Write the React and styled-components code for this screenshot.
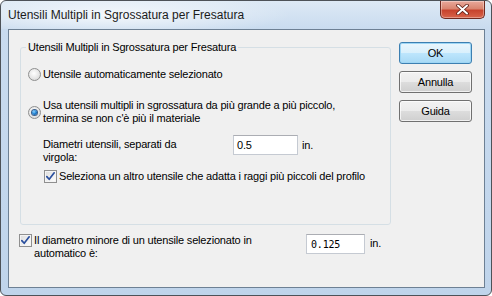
import React from 'react';
import styled, { createGlobalStyle } from 'styled-components';

const GlobalStyle = createGlobalStyle`
  html, body {
    margin: 0;
    padding: 0;
    background: #ffffff;
  }
  body {
    font-family: Tahoma, "Liberation Sans", Arial, sans-serif;
    font-size: 11px;
    letter-spacing: -0.18px;
    color: #000;
  }
`;

const Window = styled.div`
  width: 492px;
  height: 296px;
  box-sizing: border-box;
  border: 1px solid #4d5258;
  border-radius: 6px;
  background: linear-gradient(to bottom, #dde9f5 0px, #c9dbef 28px, #bfd4eb 100%);
  display: flex;
  flex-direction: column;
  overflow: hidden;
`;

const TitleBar = styled.div`
  height: 28px;
  display: flex;
  align-items: flex-start;
  justify-content: space-between;
  padding-left: 7px;
  padding-right: 6px;
  background: radial-gradient(ellipse 180px 22px at 110px 14px, rgba(255, 255, 255, 0.75), rgba(255, 255, 255, 0) 100%);
`;

const Title = styled.span`
  font-family: "Liberation Sans", Arial, sans-serif;
  font-size: 12px;
  letter-spacing: 0;
  line-height: 14px;
  margin-top: 7px;
  color: #1b1b1b;
`;

const CloseButton = styled.div`
  width: 45px;
  height: 18px;
  box-sizing: border-box;
  border: 1px solid #6f2a20;
  border-top: none;
  border-radius: 0 0 5px 5px;
  background: linear-gradient(to bottom, #e9a99b 0%, #d98570 45%, #c7432d 55%, #d8644a 100%);
  box-shadow: inset 0 0 0 1px rgba(255, 255, 255, 0.35);
  display: flex;
  align-items: center;
  justify-content: center;
`;

const Client = styled.div`
  flex: 1;
  margin: 0 6px 7px 7px;
  border: 1px solid #6d8094;
  background: #f0f0f0;
  display: flex;
  flex-direction: column;
`;

const TopRow = styled.div`
  display: flex;
  align-items: flex-start;
`;

const Group = styled.fieldset`
  box-sizing: border-box;
  width: 371px;
  margin: 10px 0 0 11px;
  padding: 14px 8px 41px 7px;
  border: 1px solid #d5dfe5;
  border-radius: 3px;
  display: flex;
  flex-direction: column;
  min-width: 0;
`;

const Legend = styled.legend`
  line-height: 14px;
  padding: 0 2px;
  margin-left: -2px;
`;

const ButtonColumn = styled.div`
  display: flex;
  flex-direction: column;
  gap: 7px;
  margin: 12px 0 0 8px;
`;

const Button = styled.div`
  width: 73px;
  height: 22px;
  box-sizing: border-box;
  border: 1px solid ${p => (p.$default ? '#3c7fb1' : '#707070')};
  border-radius: 3px;
  background: ${p =>
    p.$default
      ? 'linear-gradient(to bottom, #eaf6fd 0%, #d9f0fc 50%, #bee6fd 50%, #a7d9f5 100%)'
      : 'linear-gradient(to bottom, #f2f2f2 0%, #ebebeb 50%, #dddddd 50%, #cfcfcf 100%)'};
  box-shadow: inset 0 0 0 1px ${p => (p.$default ? '#9ed6f5' : 'rgba(255,255,255,0.7)')};
  display: flex;
  align-items: center;
  justify-content: center;
  line-height: 13px;
`;

const Row = styled.div`
  display: flex;
  align-items: ${p => p.$align || 'center'};
  margin-top: ${p => p.$top || 0}px;
  margin-left: ${p => p.$indent || 0}px;
`;

const Label = styled.span`
  line-height: 13px;
  white-space: nowrap;
  margin-left: ${p => p.$gap || 0}px;
  margin-top: ${p => p.$top || 0}px;
  width: ${p => (p.$width ? p.$width + 'px' : 'auto')};
`;

const Radio = styled.span`
  width: 13px;
  height: 13px;
  flex: 0 0 13px;
  box-sizing: border-box;
  border-radius: 50%;
  border: 1px solid #8e8f8f;
  background: radial-gradient(circle at 45% 40%, #ffffff 0%, #e6e6e6 55%, #cfcfcf 100%);
  display: flex;
  align-items: center;
  justify-content: center;
`;

const RadioDot = styled.span`
  width: 5px;
  height: 5px;
  border-radius: 50%;
  background: radial-gradient(circle at 40% 35%, #8fd3ff 0%, #1c7fd0 50%, #0b3f86 100%);
  box-shadow: 0 0 0 1px #3a5f8c;
`;

const Check = styled.span`
  width: 13px;
  height: 13px;
  flex: 0 0 13px;
  box-sizing: border-box;
  border: 1px solid #8f8f8f;
  background: linear-gradient(135deg, #dcdcdc 0%, #f4f4f4 70%, #ffffff 100%);
  box-shadow: inset 0 0 0 1px #f4f4f4;
  display: flex;
  align-items: center;
  justify-content: center;
`;

const TextBox = styled.div`
  box-sizing: border-box;
  width: ${p => p.$width}px;
  height: 20px;
  border: 1px solid #c5cad2;
  border-top-color: #abadb3;
  background: #ffffff;
  display: flex;
  align-items: center;
  padding-left: ${p => p.$pad || 3}px;
  font-family: ${p => (p.$mono ? '"DejaVu Sans Mono", "Liberation Mono", monospace' : 'inherit')};
  font-size: ${p => (p.$mono ? '10px' : '11px')};
`;

const Unit = styled.span`
  margin-left: ${p => p.$gap || 4}px;
  margin-top: ${p => p.$top || 0}px;
  line-height: 13px;
`;

const BottomRow = styled.div`
  display: flex;
  align-items: flex-start;
  margin: 9px 0 0 10px;
`;

function RadioButton({ checked }) {
  return <Radio>{checked && <RadioDot />}</Radio>;
}

function CheckBox() {
  return (
    <Check>
      <svg width="11" height="11" viewBox="0 0 11 11">
        <path d="M1.8 5.6 L4.2 8.3 L9.2 1.8" fill="none" stroke="#2a4f9e" strokeWidth="1.7" strokeLinejoin="round" strokeLinecap="round" />
      </svg>
    </Check>
  );
}

export default function App() {
  return (
    <>
      <GlobalStyle />
      <Window>
        <TitleBar>
          <Title>Utensili Multipli in Sgrossatura per Fresatura</Title>
          <CloseButton>
            <svg width="13" height="11" viewBox="0 0 13 11">
              <path d="M2 1.5 L11 9.5 M11 1.5 L2 9.5" stroke="#5a1b12" strokeWidth="3.6" strokeLinecap="round" />
              <path d="M2 1.5 L11 9.5 M11 1.5 L2 9.5" stroke="#ffffff" strokeWidth="2" strokeLinecap="round" />
            </svg>
          </CloseButton>
        </TitleBar>
        <Client>
          <TopRow>
            <Group>
              <Legend>Utensili Multipli in Sgrossatura per Fresatura</Legend>
              <Row>
                <RadioButton />
                <Label $gap={2}>Utensile automaticamente selezionato</Label>
              </Row>
              <Row $top={18}>
                <RadioButton checked />
                <Label $gap={2}>
                  Usa utensili multipli in sgrossatura da più grande a più piccolo,
                  <br />
                  termina se non c'è più il materiale
                </Label>
              </Row>
              <Row $top={10} $indent={15} $align="flex-start">
                <Label $top={3} $width={190}>
                  Diametri utensili, separati da
                  <br />
                  virgola:
                </Label>
                <TextBox $width={65}>0.5</TextBox>
                <Unit $gap={4} $top={4}>in.</Unit>
              </Row>
              <Row $top={6} $indent={16}>
                <CheckBox />
                <Label $gap={2}>Seleziona un altro utensile che adatta i raggi più piccoli del profilo</Label>
              </Row>
            </Group>
            <ButtonColumn>
              <Button $default>OK</Button>
              <Button>Annulla</Button>
              <Button>Guida</Button>
            </ButtonColumn>
          </TopRow>
          <BottomRow>
            <CheckBox />
            <Label $gap={2} $width={272}>
              Il diametro minore di un utensile selezionato in
              <br />
              automatico è:
            </Label>
            <TextBox $width={59} $pad={4} $mono>0.125</TextBox>
            <Unit $gap={5} $top={3}>in.</Unit>
          </BottomRow>
        </Client>
      </Window>
    </>
  );
}
